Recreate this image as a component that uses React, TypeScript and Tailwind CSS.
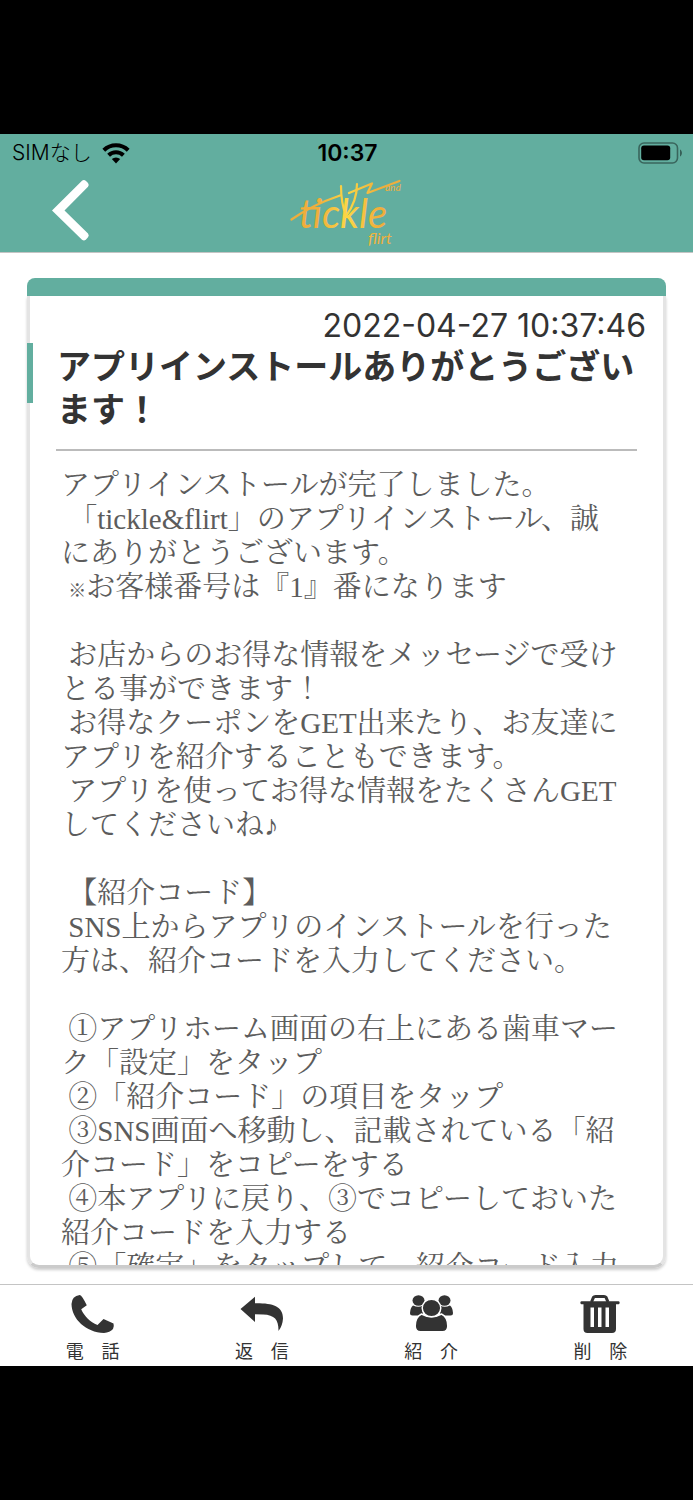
import type { ReactNode } from 'react'

const messageLines = [
  'アプリインストールが完了しました。',
  ' 「tickle&flirt」のアプリインストール、誠',
  'にありがとうございます。',
  ' ※お客様番号は『1』番になります',
  '',
  ' お店からのお得な情報をメッセージで受け',
  'とる事ができます！',
  ' お得なクーポンをGET出来たり、お友達に',
  'アプリを紹介することもできます。',
  ' アプリを使ってお得な情報をたくさんGET',
  'してくださいね♪',
  '',
  ' 【紹介コード】',
  ' SNS上からアプリのインストールを行った',
  '方は、紹介コードを入力してください。',
  '',
  ' ①アプリホーム画面の右上にある歯車マー',
  'ク「設定」をタップ',
  ' ②「紹介コード」の項目をタップ',
  ' ③SNS画面へ移動し、記載されている「紹',
  '介コード」をコピーをする',
  ' ④本アプリに戻り、③でコピーしておいた',
  '紹介コードを入力する',
  ' ⑤「確定」をタップして、紹介コード入力',
]

// The reference mark is set smaller than the text around it
function MessageLine({ text }: { text: string }) {
  return (
    <p className="h-[34px] whitespace-pre">
      {text.split(/(※)/).map((part, i) =>
        part === '※' ? (
          <span key={i} className="text-[18px] font-bold">
            {part}
          </span>
        ) : (
          part
        ),
      )}
    </p>
  )
}

function WifiIcon() {
  return (
    <svg width="28" height="21" viewBox="0 0 28 21" aria-hidden="true">
      <g fill="none" stroke="#000" strokeWidth="4">
        <path d="M1.8 7.2a17.5 17.5 0 0 1 24.4 0" />
        <path d="M6.6 12.2a10.6 10.6 0 0 1 14.8 0" />
      </g>
      <path d="M14 20.4l-4.2-4.3a6 6 0 0 1 8.4 0z" />
    </svg>
  )
}

function BatteryIcon() {
  return (
    <svg width="45" height="22" viewBox="0 0 45 22" aria-hidden="true">
      <rect x="1" y="1" width="38.5" height="20" rx="5" fill="none" stroke="#000" strokeOpacity=".42" strokeWidth="1.6" />
      <rect x="3.2" y="3.5" width="29" height="14.8" rx="2.8" />
      <path d="M42 7.5c2.6 1.2 2.6 5.8 0 7z" fillOpacity=".45" />
    </svg>
  )
}

function Logo() {
  return (
    <svg width="114" height="68" viewBox="0 0 114 68" role="img" aria-label="tickle and flirt">
      <defs>
        <linearGradient id="gold" x1="0" x2="114" y1="0" y2="0" gradientUnits="userSpaceOnUse">
          <stop offset=".25" stopColor="#efae3c" />
          <stop offset=".5" stopColor="#fbd745" />
          <stop offset=".78" stopColor="#efae3c" />
        </linearGradient>
      </defs>
      <g fill="none" stroke="url(#gold)" strokeWidth="2.2" strokeLinecap="round" strokeLinejoin="round">
        <path d="M1.5 41.5Q22 27 50 17.5" />
        <path d="M51 8c0 12 2 22 5 30" />
        <path d="M67 6c0 12-5 24-11 32" />
        <path d="M59 15l23-9.500-4.500 9.500 32-12" />
      </g>
      <g fill="url(#gold)" fontFamily="Lato, sans-serif" fontStyle="italic">
        <text x="9" y="50" fontSize="40">tickle</text>
        <text x="95" y="13" fontSize="10">and</text>
        <text x="78" y="66" fontSize="16">flirt</text>
      </g>
    </svg>
  )
}

function PhoneIcon() {
  return (
    <svg width="44" height="38" viewBox="0 0 44 38" aria-hidden="true">
      <path d="M8.800 0Q11 .5 15.800 10.300L10.200 14.300C13 21 19 27 26.500 30L32.500 24L42.500 28.500Q43.300 30.500 42 34Q39 37.500 33 38C15 37.500.8 24 .5 9Q.8 1 8.800 0Z" />
    </svg>
  )
}

function ReplyIcon() {
  return (
    <svg width="44" height="38" viewBox="0 0 44 38" aria-hidden="true">
      <path d="M.5 14L15 1.800V8.200C32 8 43 10.500 43 23.500Q42.500 31 38.500 36C38.700 25 35 19.800 23 19.400L15 19.300V27Z" />
    </svg>
  )
}

function PeopleIcon() {
  return (
    <svg width="44" height="38" viewBox="0 0 44 38" aria-hidden="true">
      <ellipse cx="9.500" cy="5.500" rx="6" ry="5.200" />
      <ellipse cx="35.500" cy="5.500" rx="6" ry="5.200" />
      <path d="M4 10.500Q9.500 13 14 10.500V20.500H3.500Q1 20.500 1 18Q1.300 12.500 4 10.500Z" />
      <path d="M41 10.500Q35.500 13 31 10.500V20.500H41.500Q44 20.500 44 18Q43.700 12.500 41 10.500Z" />
      <g stroke="#fff" strokeWidth="1.500">
        <path d="M12.500 19Q22.500 24.500 32.500 19Q38.800 22 38.800 31Q38.800 36.700 33.500 36.700H11.500Q6.200 36.700 6.200 31Q6.200 22 12.500 19Z" />
        <ellipse cx="22.500" cy="13" rx="9.300" ry="8.800" />
      </g>
    </svg>
  )
}

function TrashIcon() {
  return (
    <svg width="44" height="38" viewBox="0 0 44 38" aria-hidden="true">
      <path d="M13.500 7L15.500 2.300Q16 1.500 17.500 1.500H26Q27.500 1.500 28 2.300L30 7" fill="none" stroke="currentColor" strokeWidth="3" />
      <rect x="2.500" y="6.300" width="39" height="3" rx="1" />
      <path
        fillRule="evenodd"
        d="M5.500 8H38V34Q38 38 34 38H9.500Q5.500 38 5.500 34ZM12.500 12.500V32H16V12.500ZM20 12.500V32H23.500V12.500ZM27.500 12.500V32H31V12.500Z"
      />
    </svg>
  )
}

function TabButton({ label, children }: { label: string; children: ReactNode }) {
  return (
    <button type="button" className="flex flex-1 flex-col items-center gap-[10px] pt-[10px] text-[#333]">
      <span className="fill-current">{children}</span>
      <span className="text-[18px] leading-[18px]">{label}</span>
    </button>
  )
}

export default function App() {
  return (
    <div lang="ja" className="h-screen bg-black py-[134px] font-['Inter','Noto_Sans_CJK_JP',sans-serif]">
      <div className="flex h-full flex-col bg-white">
        <header className="border-b border-[#c4c4c4] bg-[#62ae9f]">
          {/* Status bar */}
          <div className="grid grid-cols-3 items-center pr-[10px] pl-3 text-[21px] leading-[38px] text-black">
            <div className="flex items-center gap-[10px]">
              <span className="font-light">SIMなし</span>
              <WifiIcon />
            </div>
            <span className="text-center text-[23px] font-semibold">10:37</span>
            <div className="flex justify-end">
              <BatteryIcon />
            </div>
          </div>

          <div className="grid h-20 grid-cols-3 px-12">
            <button type="button" aria-label="戻る" className="self-start justify-self-start pt-[6px]">
              <svg width="44" height="66" viewBox="0 0 44 66" aria-hidden="true">
                <path d="M4 32.500L34 2.800Q36 1.200 38 3L40 5Q41.500 7 40 8.800L16.500 32.500L40 55.500Q41.500 57.500 40 59.300L37.800 61.800Q36 63.400 34 61.800Z" fill="#fff" />
              </svg>
            </button>
            <div className="flex justify-center pt-[6px]">
              <Logo />
            </div>
          </div>
        </header>

        <main className="flex min-h-0 flex-1 flex-col px-[27px] pt-[25px] pb-4">
          <div className="h-[18px] shrink-0 rounded-t-lg bg-[#62ae9f]" />
          <section className="flex min-h-0 flex-1 flex-col rounded-b-xl border-x-[3px] border-b-[3px] border-x-[#e4e4e4] border-b-[#cbcbcb] shadow-[0_2px_3px_rgba(0,0,0,0.2)]">
            <time className="pt-[13px] pr-[17px] text-right text-[32px] leading-[34px] text-[#333]">2022-04-27 10:37:46</time>
            <div className="-ml-[3px] flex">
              <span className="h-[60px] w-[6px] shrink-0 bg-[#62ae9f]" />
              <h1 className="pt-[2px] pl-6 text-[34px] leading-[43px] font-bold text-[#333]">
                アプリインストールありがとうござい
                <br />
                ます！
              </h1>
            </div>
            <hr className="mt-[18px] mr-[26px] ml-[26px] border-t-2 border-[#bbb]" />
            <div className="mt-[17px] min-h-0 flex-1 overflow-hidden pl-[31px] font-['Liberation_Serif','Noto_Serif_CJK_JP','Noto_Sans_CJK_JP',serif] text-[29px] leading-[34px] text-[#5c5c5c]">
              {messageLines.map((line, i) => (
                <MessageLine key={i} text={line} />
              ))}
            </div>
          </section>
        </main>

        <nav className="flex h-[82px] shrink-0 border-t border-[#c4c4c4] px-2">
          <TabButton label="電　話">
            <PhoneIcon />
          </TabButton>
          <TabButton label="返　信">
            <ReplyIcon />
          </TabButton>
          <TabButton label="紹　介">
            <PeopleIcon />
          </TabButton>
          <TabButton label="削　除">
            <TrashIcon />
          </TabButton>
        </nav>
      </div>
    </div>
  )
}
